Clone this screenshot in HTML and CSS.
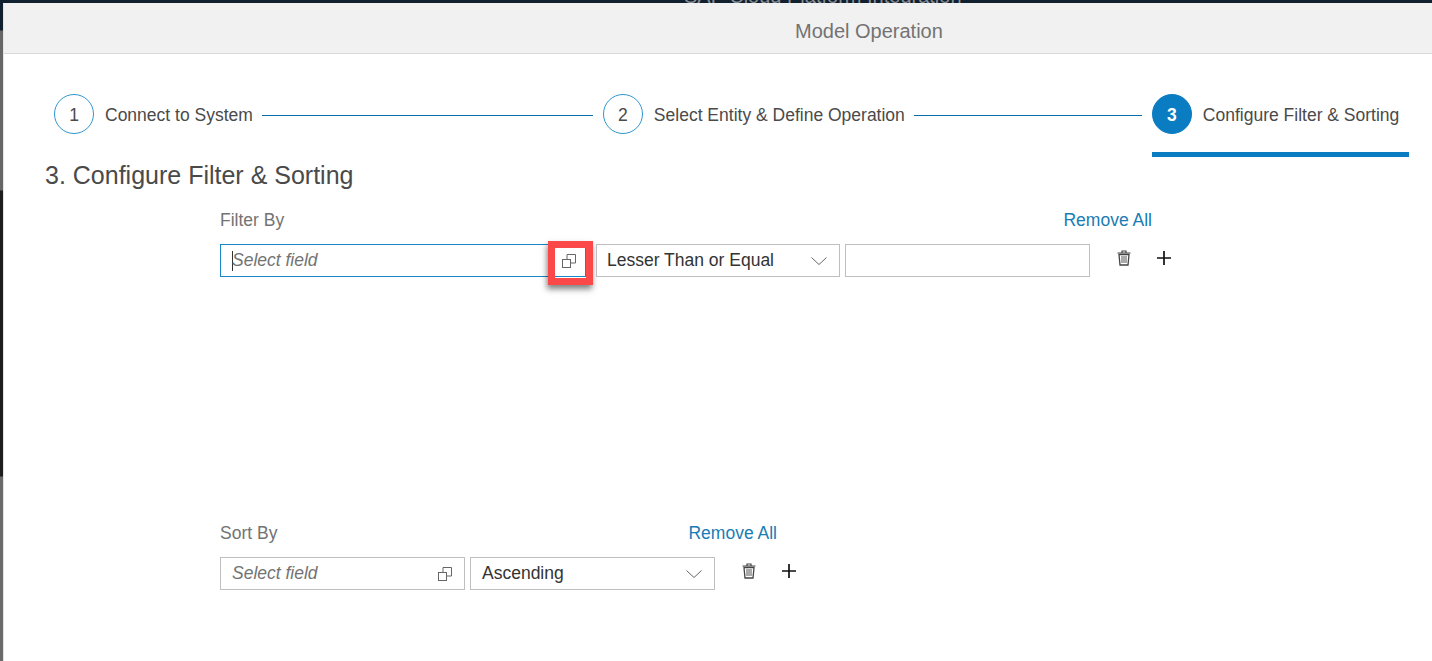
FILE: index.html
```html
<!DOCTYPE html>
<html lang="en">
<head>
  <meta charset="UTF-8" />
  <title>Model Operation</title>
  <link rel="stylesheet" href="styles.css">
</head>
<body>
  <svg class="icon-defs" width="0" height="0" aria-hidden="true">
    <symbol id="icon-help" viewBox="0 0 14 14">
      <path d="M5 5V0.5H13.5V9H8.5" fill="none" stroke="currentColor" />
      <rect x="0.5" y="5.5" width="8" height="8" fill="none" stroke="currentColor" />
    </symbol>
    <symbol id="icon-trash" viewBox="0 0 14 16">
      <path d="M0.5 3H13.5M5 3V1H9V3" fill="none" stroke="currentColor" stroke-width="1.2" />
      <path d="M2 4.5H12L11 15H3Z" fill="none" stroke="currentColor" stroke-width="1.3" />
      <path d="M5 6V13M7 6V13M9 6V13" fill="none" stroke="currentColor" stroke-width="0.9" />
    </symbol>
    <symbol id="icon-plus" viewBox="0 0 14 14">
      <path d="M7 0V14M0 7H14" fill="none" stroke="currentColor" stroke-width="1.7" />
    </symbol>
    <symbol id="icon-chevron" viewBox="0 0 16 8">
      <path d="M0.5 0.5L8 7.5L15.5 0.5" fill="none" stroke="currentColor" />
    </symbol>
  </svg>

  <div class="backdrop-title">SAP Cloud Platform Integration</div>

  <div class="dialog">
    <header class="dialog-header">Model Operation</header>

    <div class="wizard">
      <div class="step step-1">
        <span class="step-num">1</span>
        <span class="step-label">Connect to System</span>
      </div>
      <span class="step-line line-1"></span>
      <div class="step step-2">
        <span class="step-num">2</span>
        <span class="step-label">Select Entity &amp; Define Operation</span>
      </div>
      <span class="step-line line-2"></span>
      <div class="step step-active">
        <span class="step-num">3</span>
        <span class="step-label">Configure Filter &amp; Sorting</span>
      </div>
    </div>

    <h2 class="page-title">3. Configure Filter &amp; Sorting</h2>

    <section class="group filter-group">
      <div class="group-head">
        <span class="group-label">Filter By</span>
        <a class="remove-all" href="#">Remove All</a>
      </div>
      <div class="field-row">
        <div class="field value-help focused">
          <span class="caret"></span>
          <span class="placeholder">Select field</span>
          <svg class="help-icon"><use href="#icon-help" /></svg>
          <span class="highlight"></span>
        </div>
        <div class="field select"><span>Lesser Than or Equal</span><svg class="chevron"><use href="#icon-chevron" /></svg></div>
        <div class="field value"></div>
        <svg class="trash"><use href="#icon-trash" /></svg>
        <svg class="plus"><use href="#icon-plus" /></svg>
      </div>
    </section>

    <section class="group sort-group">
      <div class="group-head">
        <span class="group-label">Sort By</span>
        <a class="remove-all" href="#">Remove All</a>
      </div>
      <div class="field-row">
        <div class="field value-help">
          <span class="placeholder">Select field</span>
          <svg class="help-icon"><use href="#icon-help" /></svg>
        </div>
        <div class="field select"><span>Ascending</span><svg class="chevron"><use href="#icon-chevron" /></svg></div>
        <svg class="trash"><use href="#icon-trash" /></svg>
        <svg class="plus"><use href="#icon-plus" /></svg>
      </div>
    </section>
  </div>
</body>
</html>
```

FILE: styles.css
```css
html, body {
  height: 100%;
}

body {
  margin: 0;
  overflow: hidden;
  padding: 3px 0 0 3px;
  box-sizing: border-box;
  background: linear-gradient(to bottom, #10202f 0, #10202f 30px, #666 31px, #666 190px, #1e1e1e 191px, #1e1e1e 476px, #6a6a6a 477px);
  font-family: "Liberation Sans", Arial, sans-serif;
  color: #4a4a4a;
}

.icon-defs {
  position: absolute;
}

/* page behind the dialog, only its lower edge shows */
.backdrop-title {
  position: absolute;
  top: -15px;
  left: 684px;
  font-size: 20px;
  line-height: 22px;
  white-space: nowrap;
  color: #8a8f96;
}

.dialog {
  position: relative;
  height: 100%;
  box-sizing: border-box;
  border-left: 1px solid #e4e4e4;
  background: #fff;
}

.dialog-header {
  height: 51px;
  box-sizing: border-box;
  padding: 15px 0 0 791px;
  background: #f1f1f1;
  border-bottom: 1px solid #d9d9d9;
  font-size: 20px;
  line-height: 26px;
  color: #737373;
}

/* wizard */
.wizard {
  display: flex;
  align-items: flex-start;
  padding: 40px 0 0 50px;
  height: 63px;
}

.step {
  display: flex;
  align-items: center;
  gap: 11px;
  height: 40px;
  font-size: 17.5px;
  white-space: nowrap;
}

.step-label {
  padding-top: 2px;
}

.step-num {
  width: 40px;
  height: 40px;
  box-sizing: border-box;
  border: 1px solid #2f96d0;
  border-radius: 50%;
  text-align: center;
  line-height: 40px;
  font-size: 17.5px;
}

.step-line {
  height: 1px;
  margin-top: 21px;
  background: #0a6ea8;
}

.line-1 {
  width: 331px;
  margin-left: 9px;
  margin-right: 10px;
}

.line-2 {
  width: 228px;
  margin-left: 9px;
  margin-right: 10px;
}

.step-active {
  width: 257px;
  height: 63px;
  padding-bottom: 18px;
  box-sizing: border-box;
  border-bottom: 5px solid #0a7cc1;
}

.step-active .step-num {
  background: #0a7cc1;
  border-color: #0a7cc1;
  color: #fff;
  font-weight: bold;
}

.page-title {
  margin: 0;
  padding: 3px 0 0 41px;
  font-size: 25px;
  line-height: 30px;
  font-weight: normal;
}

/* filter + sort blocks */
.group {
  margin-left: 216px;
}

.filter-group {
  padding-top: 18px;
  height: 331px;
  box-sizing: border-box;
  width: 960px;
}

.sort-group {
  width: 600px;
}

.filter-group .group-head {
  width: 932px;
}

.group-head {
  display: flex;
  justify-content: space-between;
  align-items: center;
  height: 24px;
  font-size: 17.5px;
  margin-bottom: 12px;
}

.sort-group .group-head {
  width: 557px;
}

.group-label {
  color: #737373;
}

.remove-all {
  color: #1a7cb5;
  text-decoration: none;
}

.field-row {
  display: flex;
  align-items: flex-start;
  gap: 5px;
}

.field {
  position: relative;
  flex: none;
  height: 33px;
  box-sizing: border-box;
  border: 1px solid #bfbfbf;
  display: flex;
  align-items: center;
  padding: 0 10px;
  font-size: 17.5px;
  color: #333;
  background: #fff;
  width: 245px;
}

.sort-group .field {
  padding-left: 11px;
}

.value-help {
  padding-left: 11px;
}

.filter-group .value-help {
  width: 366px;
  margin-right: 5px;
}

.filter-group .select {
  width: 244px;
}

.focused {
  border-color: #1a85c6;
}

.caret {
  width: 1px;
  height: 20px;
  background: #333;
  margin-right: -1px;
}

.placeholder {
  font-style: italic;
  color: #737373;
}

.help-icon {
  position: absolute;
  right: 12px;
  top: 9px;
  width: 14px;
  height: 14px;
  color: #666;
}

.focused .help-icon {
  right: 9px;
}

.highlight {
  position: absolute;
  left: 327px;
  top: -4px;
  width: 45px;
  height: 44px;
  box-sizing: border-box;
  border: 7px solid #fb4848;
  box-shadow: -1px 4px 6px rgba(0, 0, 0, 0.5);
}

.chevron {
  position: absolute;
  right: 12px;
  top: 12px;
  width: 16px;
  height: 8px;
  color: #666;
}

.trash {
  flex: none;
  width: 14px;
  height: 16px;
  margin: 6px 0 0 22px;
  color: #444;
}

.plus {
  flex: none;
  width: 14px;
  height: 14px;
  margin: 7px 0 0 21px;
  color: #111;
}
```
